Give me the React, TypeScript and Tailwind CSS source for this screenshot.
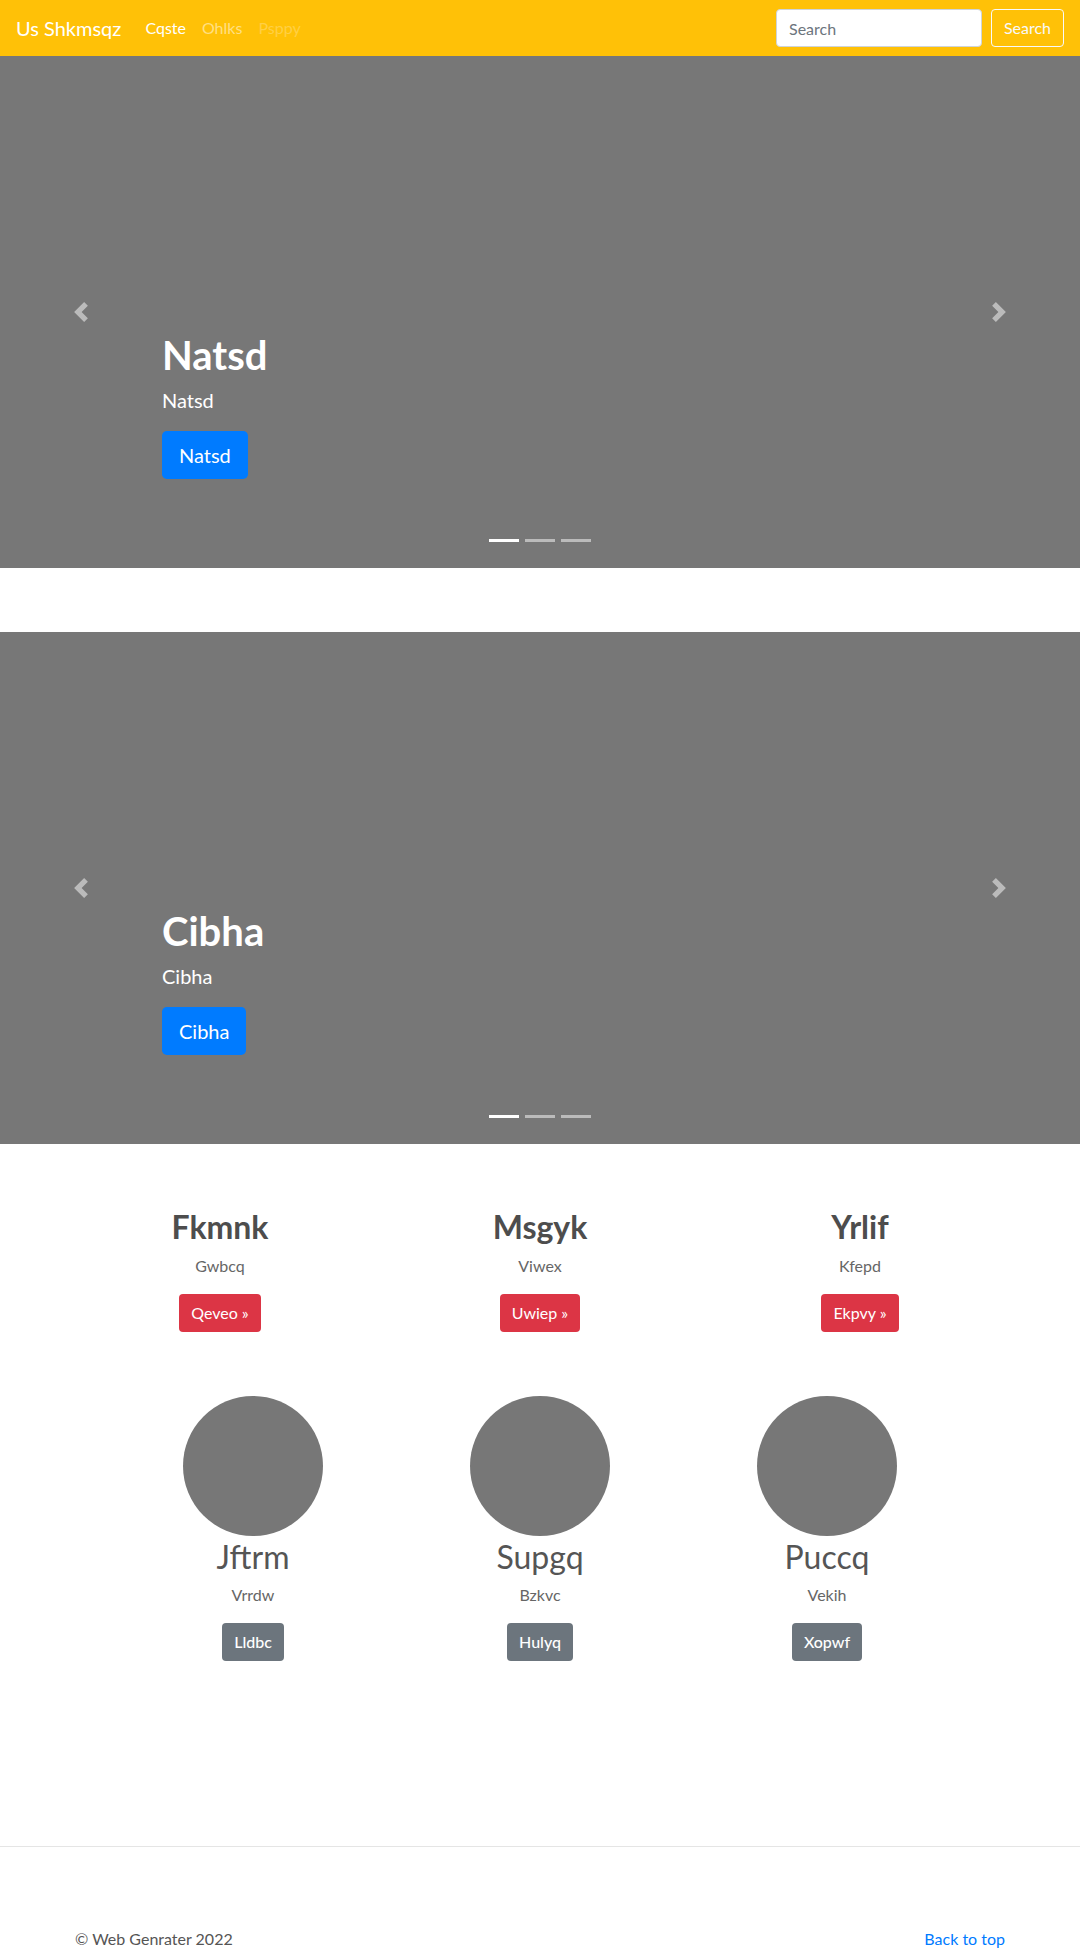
import React from 'react';

type Slide = { title: string };

function Chevron({ dir }: { dir: 'left' | 'right' }) {
  return (
    <svg width="20" height="20" viewBox="0 0 8 8" fill="#fff" className={dir === 'right' ? 'rotate-180' : ''}>
      <path d="M5.25 0l-4 4 4 4 1.5-1.5L4.25 4l2.5-2.5L5.25 0z" />
    </svg>
  );
}

function Carousel({ title }: Slide) {
  return (
    <div className="relative h-[512px] bg-[#777] flex flex-col justify-end pl-[162px] pr-[162px] pb-[89px]">
      {/* prev / next controls */}
      <div className="absolute left-0 top-0 bottom-0 w-[15%] flex items-center justify-center opacity-50">
        <Chevron dir="left" />
      </div>
      <div className="absolute right-0 top-0 bottom-0 w-[15%] flex items-center justify-center opacity-50">
        <Chevron dir="right" />
      </div>

      {/* caption */}
      <h1 className="text-[40px] leading-[48px] font-bold text-white mb-2">{title}</h1>
      <p className="text-[20px] leading-[30px] text-white mb-4 -mt-[2px]">{title}</p>
      <button className="self-start bg-[#007bff] text-white text-[20px] leading-[30px] px-[17px] py-[9px] rounded-[4.8px]">
        {title}
      </button>

      {/* indicators */}
      <div className="absolute left-0 right-0 bottom-[26px] flex justify-center gap-[6px]">
        <span className="w-[30px] h-[3px] bg-white" />
        <span className="w-[30px] h-[3px] bg-white opacity-50" />
        <span className="w-[30px] h-[3px] bg-white opacity-50" />
      </div>
    </div>
  );
}

const features = [
  { title: 'Fkmnk', text: 'Gwbcq', btn: 'Qeveo »' },
  { title: 'Msgyk', text: 'Viwex', btn: 'Uwiep »' },
  { title: 'Yrlif', text: 'Kfepd', btn: 'Ekpvy »' },
];

const people = [
  { title: 'Jftrm', text: 'Vrrdw', btn: 'Lldbc' },
  { title: 'Supgq', text: 'Bzkvc', btn: 'Hulyq' },
  { title: 'Puccq', text: 'Vekih', btn: 'Xopwf' },
];

export default function App() {
  return (
    <div className="min-h-[1950px] bg-white font-['Lato','Noto_Sans',sans-serif] text-[#555]">
      {/* Navbar */}
      <nav className="h-14 bg-[#ffc107] flex items-center px-4">
        <span className="text-[20px] leading-[30px] text-white mr-4">Us Shkmsqz</span>
        <div className="flex items-center text-[16px]">
          <span className="px-2 text-white">Cqste</span>
          <span className="px-2 text-white/50">Ohlks</span>
          <span className="px-2 text-white/25">Psppy</span>
        </div>
        <div className="ml-auto flex items-center gap-[9px]">
          <input
            placeholder="Search"
            className="w-[206px] h-[38px] bg-white border border-[#ced4da] rounded-[4px] px-3 text-[16px] text-[#495057] placeholder:text-[#6c757d] outline-none"
          />
          <button className="h-[38px] w-[73px] border border-[#f8f9fa] rounded-[4px] text-[#f8f9fa] text-[16px]">
            Search
          </button>
        </div>
      </nav>

      <div className="mb-16">
        <Carousel title="Natsd" />
      </div>
      <div className="mb-16">
        <Carousel title="Cibha" />
      </div>

      {/* Feature columns */}
      <div className="w-[960px] mx-auto grid grid-cols-3">
        {features.map((f) => (
          <div key={f.title} className="px-[15px] text-center">
            <h2 className="text-[32px] leading-[38px] font-bold text-[#4d4d4d] mb-2">{f.title}</h2>
            <p className="text-[16px] leading-6 text-[#666] mb-4">{f.text}</p>
            <p className="mb-4">
              <button className="bg-[#dc3545] text-white text-[16px] leading-6 px-3 py-[7px] rounded-[4px]">
                {f.btn}
              </button>
            </p>
          </div>
        ))}
      </div>

      {/* Circle columns */}
      <div className="w-[861px] mx-auto grid grid-cols-3 mt-12">
        {people.map((p) => (
          <div key={p.title} className="flex flex-col items-center text-center">
            <div className="w-[140px] h-[140px] rounded-full bg-[#777]" />
            <h2 className="mt-[3px] text-[32px] leading-[36px] font-normal text-[#555] mb-2">{p.title}</h2>
            <p className="text-[16px] leading-6 text-[#666] mb-4">{p.text}</p>
            <button className="bg-[#6c757d] text-white text-[16px] leading-6 font-medium px-3 py-[7px] rounded-[4px]">
              {p.btn}
            </button>
          </div>
        ))}
      </div>

      <hr className="mt-[185px] border-0 border-t border-[#e5e5e5]" />

      {/* Footer */}
      <footer className="w-[960px] mx-auto px-[15px] pt-[80px] pb-12 flex justify-between text-[16px] leading-6">
        <p className="text-[#555]">© Web Genrater 2022</p>
        <a className="text-[#007bff]">Back to top</a>
      </footer>
    </div>
  );
}
